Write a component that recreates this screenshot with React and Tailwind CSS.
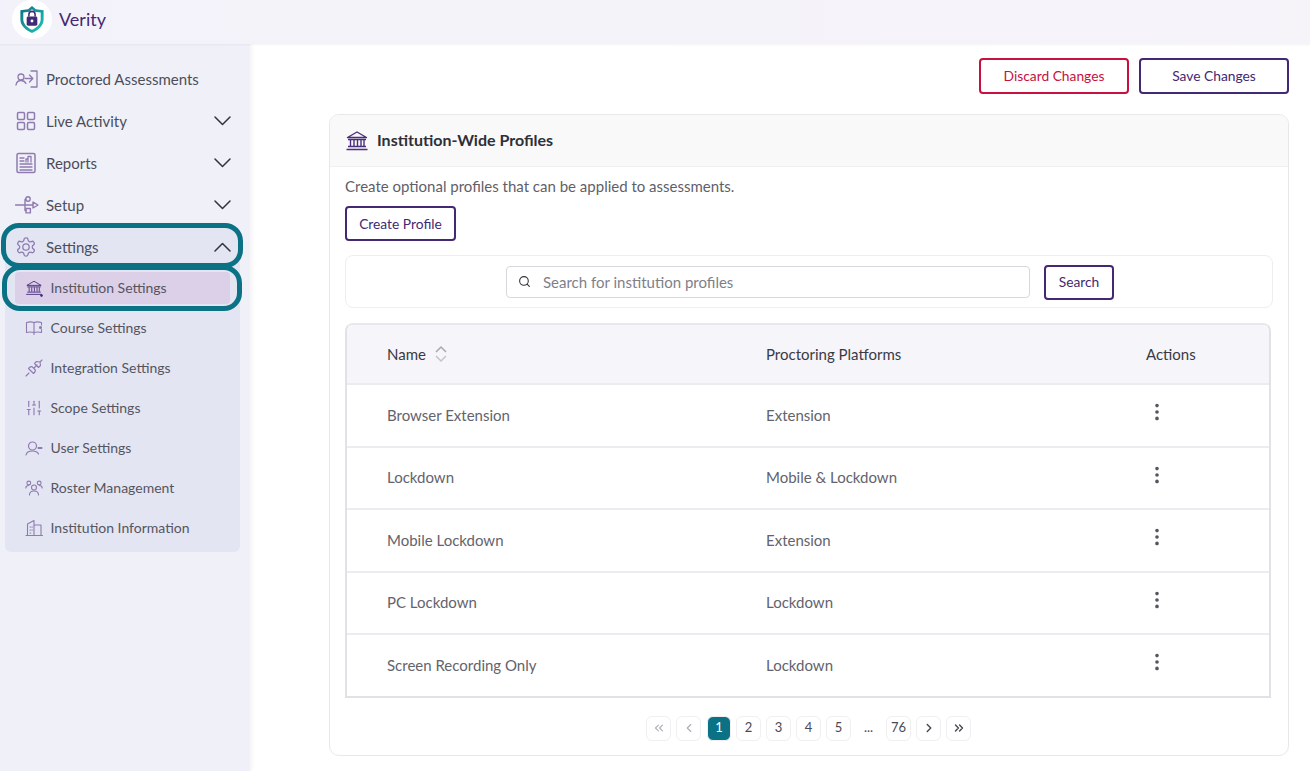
import React from "react";
import { ChevronLeft, ChevronRight, ChevronsLeft, ChevronsRight, Search, EllipsisVertical, SlidersVertical } from "lucide-react";

const P = { fill: "none", stroke: "#8f7bb0", strokeWidth: 1.3, strokeLinecap: "round", strokeLinejoin: "round" };

const Chev = ({ up }) => (
  <svg width="17" height="10" viewBox="0 0 17 10" fill="none" stroke="#33333d" strokeWidth="1.500" strokeLinecap="round" strokeLinejoin="round">
    <path d={up ? "M1 9l7.500-7.500L16 9" : "M1 1l7.500 7.500L16 1"} />
  </svg>
);

const Bank = ({ c = "#4a2f7f", s = 24, dot, w = 1.4 }) => (
  <svg width={s} height={s} viewBox="0 0 24 24" fill="none" stroke={c} strokeWidth={w}>
    <path d="M2.5 8.5 12 3l9.500 5.500z" strokeLinejoin="round" />
    <path d="M3 10.500h18M5.500 11v6M9 11v6M12.500 11v6M16 11v6M19 11v6M3 17.500h18M1.500 20.500h21" />
    {dot && <circle cx="22" cy="22" r="1.300" fill={c} />}
  </svg>
);

const IconAssess = () => (
  <svg width="24" height="20" viewBox="0 0 24 20" {...P}>
    <circle cx="6" cy="8" r="3" />
    <path d="M1 16c.5-3 2.500-4.500 5-4.500s4 1 5 3" />
    <path d="M10 9.500h7.500M14.500 6l3.300 3.500-3.300 3.500" />
    <path d="M16 2h6v16h-6" />
  </svg>
);
const IconGrid = () => (
  <svg width="22" height="22" viewBox="0 0 22 22" {...P} strokeWidth="1.500">
    <rect x="2.500" y="2.500" width="7" height="7" rx="1.200" />
    <rect x="12.500" y="2.500" width="7" height="7" rx="1.200" />
    <rect x="2.500" y="12.500" width="7" height="7" rx="1.200" />
    <rect x="12.500" y="12.500" width="7" height="7" rx="1.200" />
  </svg>
);
const IconReport = () => (
  <svg width="22" height="22" viewBox="0 0 22 22" {...P}>
    <rect x="2" y="1.500" width="18" height="19" rx="1.500" strokeWidth="1.500" />
    <path d="M5 6h4M5 9h4M5 12h12M5 15h12M5 18h12" />
    <path d="M11 10V7h2v3M13 10V4.500h3V10" />
  </svg>
);
const IconUsb = () => (
  <svg width="24" height="20" viewBox="0 0 24 20" {...P} strokeWidth="1.400">
    <path d="M0.500 10H18" />
    <path d="M10 10V4.500h1M10 10v5.500h1" />
    <circle cx="13" cy="4" r="2.200" />
    <rect x="11" y="13.500" width="4.400" height="4.400" />
    <path d="M18 7l5 3-5 3z" />
  </svg>
);
const IconGear = () => (
  <svg width="22" height="22" viewBox="0 0 24 24" {...P} strokeWidth="1.400">
    <path d="M12.220 2h-.44a2 2 0 0 0-2 2v.18a2 2 0 0 1-1 1.730l-.43.250a2 2 0 0 1-2 0l-.15-.08a2 2 0 0 0-2.730.730l-.22.380a2 2 0 0 0 .730 2.730l.15.100a2 2 0 0 1 1 1.720v.510a2 2 0 0 1-1 1.740l-.15.090a2 2 0 0 0-.730 2.730l.22.380a2 2 0 0 0 2.730.730l.15-.08a2 2 0 0 1 2 0l.43.250a2 2 0 0 1 1 1.730V20a2 2 0 0 0 2 2h.44a2 2 0 0 0 2-2v-.18a2 2 0 0 1 1-1.730l.43-.250a2 2 0 0 1 2 0l.15.080a2 2 0 0 0 2.730-.730l.22-.390a2 2 0 0 0-.730-2.730l-.15-.080a2 2 0 0 1-1-1.740v-.500a2 2 0 0 1 1-1.740l.15-.090a2 2 0 0 0 .730-2.730l-.22-.380a2 2 0 0 0-2.730-.730l-.15.080a2 2 0 0 1-2 0l-.43-.250a2 2 0 0 1-1-1.730V4a2 2 0 0 0-2-2z" />
    <circle cx="12" cy="12" r="3.500" />
  </svg>
);
const IconBook = () => (
  <svg width="18" height="18" viewBox="0 0 18 18" {...P} strokeWidth="1.100">
    <path d="M9 3.500C7 2.800 4 2.800 1.500 3.500v10c2.500-.7 5-.7 7.500 0 2.500-.7 5-.7 7.500 0v-3M9 3.500c2-.7 5-.7 7.500 0V6M9 3.500v12" />
    <circle cx="15.500" cy="8.500" r="1" fill="#8f7bb0" />
  </svg>
);
const IconPlug = () => (
  <svg width="18" height="18" viewBox="0 0 18 18" {...P} strokeWidth="1.100">
    <path d="M1 17l3-3M3.500 9.500l5 5 1-1c1-1 1-2.500 0-3.500l-1.500-1.500c-1-1-2.500-1-3.500 0zM12 6l-2.500 2.500" />
    <path d="M9.500 4.500l4 4 2-2-.5-3.500-3.500-.5zM15 3l2-2" />
  </svg>
);
const IconUser = () => (
  <svg width="18" height="18" viewBox="0 0 18 18" {...P} strokeWidth="1.200">
    <circle cx="7.500" cy="7" r="4" />
    <path d="M1 16c.5-2.500 3-4 6.500-4s5 1 6 3" />
    <path d="M13.500 9h3" strokeWidth="2" />
  </svg>
);
const IconRoster = () => (
  <svg width="18" height="18" viewBox="0 0 18 18" {...P} strokeWidth="1.100">
    <circle cx="9" cy="8.500" r="2.500" />
    <path d="M4.500 16c0-2.500 2-4 4.500-4s4.500 1.500 4.500 4" />
    <circle cx="3.800" cy="4" r="1.900" />
    <circle cx="14.200" cy="4" r="1.900" />
    <path d="M.8 9c0-1.500 1.300-2.500 3-2.500M17.200 9c0-1.500-1.300-2.500-3-2.500" />
  </svg>
);
const IconBuilding = () => (
  <svg width="18" height="18" viewBox="0 0 18 18" {...P} strokeWidth="1.100">
    <path d="M1 16.500h16.500M2.500 16.500V5L9 1.500v15M9 6h7v10.500" />
    <path d="M5 8h.8M5 11h.8M5 14h.8M7 8h.4M7 11h.4" />
  </svg>
);
const Sliders = () => <SlidersVertical size={18} strokeWidth={1.500} color="#8f7bb0" />;

const Logo = () => (
  <div className="flex h-[39px] w-[40px] shrink-0 items-center justify-center rounded-full bg-white">
    <svg width="26" height="29" viewBox="0 0 26 30">
      <defs>
        <linearGradient id="sh" x1="0" y1="0" x2="1" y2="1">
          <stop offset="0" stopColor="#0b6f80" />
          <stop offset="1" stopColor="#23c6b8" />
        </linearGradient>
      </defs>
      <path d="M13 1 17 4.500 25 5.500V15c0 6-5 11-12 14C6 26 1 21 1 15V5.500L9 4.500z" fill="url(#sh)" />
      <path d="M13 4.500 16 7l6 .8V15c0 4.500-3.800 8.200-9 10.700C7.800 23.200 4 19.500 4 15V7.800L10 7z" fill="#fff" />
      <rect x="7.500" y="12" width="11" height="9.500" rx="1.500" fill="#3f2a78" />
      <path d="M9.800 12V9.800a3.200 3.200 0 0 1 6.400 0V12" fill="none" stroke="#3f2a78" strokeWidth="1.600" />
      <circle cx="13" cy="16.500" r="1.500" fill="#fff" />
    </svg>
  </div>
);

const TopItem = ({ icon, label, chevron }) => (
  <div className="flex h-[42px] items-center pl-[15px] pr-[19px]">
    <span className="flex w-[31px] items-center">{icon}</span>
    <span className="flex-1 text-[15px] text-[#4d4d5a]">{label}</span>
    {chevron && <Chev />}
  </div>
);

const SubItem = ({ icon, label, active }) => (
  <div className="flex h-[40px] items-center px-[10px] py-[4px]">
    <div className={`flex h-[32px] flex-1 items-center rounded-[4px] pl-[10px] ${active ? "bg-[#dccfe8]" : ""}`}>
      <span className="flex w-[25.500px] items-center">{icon}</span>
      <span className="pb-[2px] text-[14px] text-[#55555f]">{label}</span>
    </div>
  </div>
);

const Sidebar = () => (
  <aside className="flex w-[250px] shrink-0 flex-col bg-[#f0f1f8] pt-[14px] shadow-[2px_0_4px_rgba(0,0,0,0.05)]">
    <TopItem icon={<IconAssess />} label="Proctored Assessments" />
    <TopItem icon={<IconGrid />} label="Live Activity" chevron />
    <TopItem icon={<IconReport />} label="Reports" chevron />
    <TopItem icon={<IconUsb />} label="Setup" chevron />
    <div className="relative ml-[5px] w-[235px] rounded-[6px] bg-[#e3e5f3] pb-[4px]">
      <div className="relative -ml-[5px] flex h-[42px] w-[240px] items-center pl-[15px] pr-[9px]">
        <span className="flex w-[31px] items-center"><IconGear /></span>
        <span className="flex-1 text-[15px] text-[#4d4d5a]">Settings</span>
        <Chev up />
        <div className="absolute left-[1px] -right-[3px] -top-[3px] h-[45px] rounded-[18px] border-[5px] border-[#0b7285]" />
      </div>
      <div className="relative">
        <SubItem icon={<Bank s={18} dot w={1.2} />} label="Institution Settings" active />
        <div className="absolute -left-[3px] -right-[2px] -top-[3px] h-[46px] rounded-[18px] border-[5px] border-[#0b7285]" />
      </div>
      <SubItem icon={<IconBook />} label="Course Settings" />
      <SubItem icon={<IconPlug />} label="Integration Settings" />
      <SubItem icon={<Sliders />} label="Scope Settings" />
      <SubItem icon={<IconUser />} label="User Settings" />
      <SubItem icon={<IconRoster />} label="Roster Management" />
      <SubItem icon={<IconBuilding />} label="Institution Information" />
    </div>
  </aside>
);

const OutlineBtn = ({ children, red, className = "" }) => (
  <button className={`flex items-center justify-center rounded-[4px] border-2 bg-white text-[13.800px] ${red ? "border-[#c8103f] text-[#c8103f]" : "border-[#432874] text-[#432874]"} ${className}`}>
    {children}
  </button>
);

const rows = [
  ["Browser Extension", "Extension"],
  ["Lockdown", "Mobile & Lockdown"],
  ["Mobile Lockdown", "Extension"],
  ["PC Lockdown", "Lockdown"],
  ["Screen Recording Only", "Lockdown"],
];

const Table = () => (
  <div className="mr-[2px] mt-[15px] rounded-t-[8px] border-2 border-[#e2e2e6] border-t-[#e8e8ec]">
    <div className="flex h-[60px] items-center rounded-t-[8px] border-b-2 border-[#ececf0] bg-[#f5f5fa] text-[15px] text-[#3a3a44]">
      <div className="flex w-[419px] items-center gap-[8px] pl-[40px]">
        Name
        <svg width="14" height="18" viewBox="0 0 14 18" fill="none" stroke="#c4c4cc" strokeWidth="1.500" strokeLinejoin="round">
          <path d="M2 7l5-5 5 5" stroke="#a8a8b0" />
          <path d="M2 11l5 5 5-5" />
        </svg>
      </div>
      <div className="w-[380px]">Proctoring Platforms</div>
      <div>Actions</div>
    </div>
    {rows.map((r, i) => (
      <div key={r[0]} className={`box-content flex h-[60.500px] items-center text-[15px] text-[#63636d] ${i < rows.length - 1 ? "border-b-2 border-[#ececf0]" : ""}`}>
        <div className="w-[419px] pb-[1px] pl-[40px]">{r[0]}</div>
        <div className="w-[380px] pb-[1px]">{r[1]}</div>
        <div className="-mt-[6px]"><EllipsisVertical size={22} strokeWidth={2} color="#55555f" /></div>
      </div>
    ))}
  </div>
);

const PageBtn = ({ children, active, dim, plain }) => (
  <div className={`flex h-[25px] items-center justify-center rounded-[6px] text-[13px] ${active ? "ml-[1px] w-[24px]" : "w-[25px]"} ${plain ? "" : "border border-[#f0f0f2]"} ${active ? "border-[#0b7285] bg-[#0b7285] text-white" : dim ? "text-[#b0b0b6]" : "text-[#4a4a52]"}`}>
    {children}
  </div>
);

const Pagination = () => (
  <div className="mt-[18px] flex items-center justify-center gap-[5px] pr-[1px]">
    <PageBtn dim><ChevronsLeft size={14} /></PageBtn>
    <PageBtn dim><ChevronLeft size={14} /></PageBtn>
    <PageBtn active>1</PageBtn>
    <PageBtn>2</PageBtn>
    <PageBtn>3</PageBtn>
    <PageBtn>4</PageBtn>
    <PageBtn>5</PageBtn>
    <PageBtn plain>...</PageBtn>
    <PageBtn>76</PageBtn>
    <PageBtn><ChevronRight size={14} strokeWidth={2.500} /></PageBtn>
    <PageBtn><ChevronsRight size={14} strokeWidth={2.500} /></PageBtn>
  </div>
);

export default function App() {
  return (
    <div className="flex h-[771px] w-full flex-col overflow-hidden bg-white font-['Lato',sans-serif]">
      <header className="relative z-10 flex h-[44px] shrink-0 items-start gap-[7px] bg-gradient-to-r from-[#f3f2fa] to-[#f6f4f9] pl-[12px] shadow-[0_1px_2px_rgba(0,0,0,0.05)]">
        <Logo />
        <span className="text-[18px] leading-[39px] text-[#432874]">Verity</span>
      </header>
      <div className="flex min-h-0 flex-1">
        <Sidebar />
        <main className="flex flex-1 flex-col pl-[79px] pr-[21px] pt-[14px]">
          <div className="flex justify-end gap-[10px]">
            <OutlineBtn red className="h-[36px] w-[150px] pt-[1px]">Discard Changes</OutlineBtn>
            <OutlineBtn className="h-[36px] w-[150px] pt-[1px]">Save Changes</OutlineBtn>
          </div>
          <section className="mt-[20px] h-[642px] rounded-[10px] border border-[#e8e8ea]">
            <div className="flex h-[52px] items-center gap-[8px] rounded-t-[10px] border-b border-[#f0f0f2] bg-[#f9f9f9] pl-[15px]">
              <Bank s={24} />
              <h2 className="pb-[2px] text-[16px] font-bold text-[#2f2f38]">Institution-Wide Profiles</h2>
            </div>
            <div className="px-[15px] pt-[10px]">
              <p className="-mt-[1px] text-[15px] leading-[20px] text-[#5f5f69]">Create optional profiles that can be applied to assessments.</p>
              <OutlineBtn className="mt-[10px] h-[35px] w-[111px] pt-[1px]">Create Profile</OutlineBtn>
              <div className="mt-[14px] flex h-[53px] items-center rounded-[8px] border border-[#eeeef0] pl-[160px]">
                <div className="flex h-[32px] w-[524px] items-center gap-[12px] rounded-[4px] border border-[#d8d8dc] pl-[11px]">
                  <Search size={13} color="#33333d" strokeWidth={2} />
                  <span className="pt-[1px] text-[15px] text-[#7f7f88]">Search for institution profiles</span>
                </div>
                <OutlineBtn className="ml-[14px] mt-[1px] h-[35px] w-[70px]">Search</OutlineBtn>
              </div>
              <Table />
              <Pagination />
            </div>
          </section>
        </main>
      </div>
    </div>
  );
}
